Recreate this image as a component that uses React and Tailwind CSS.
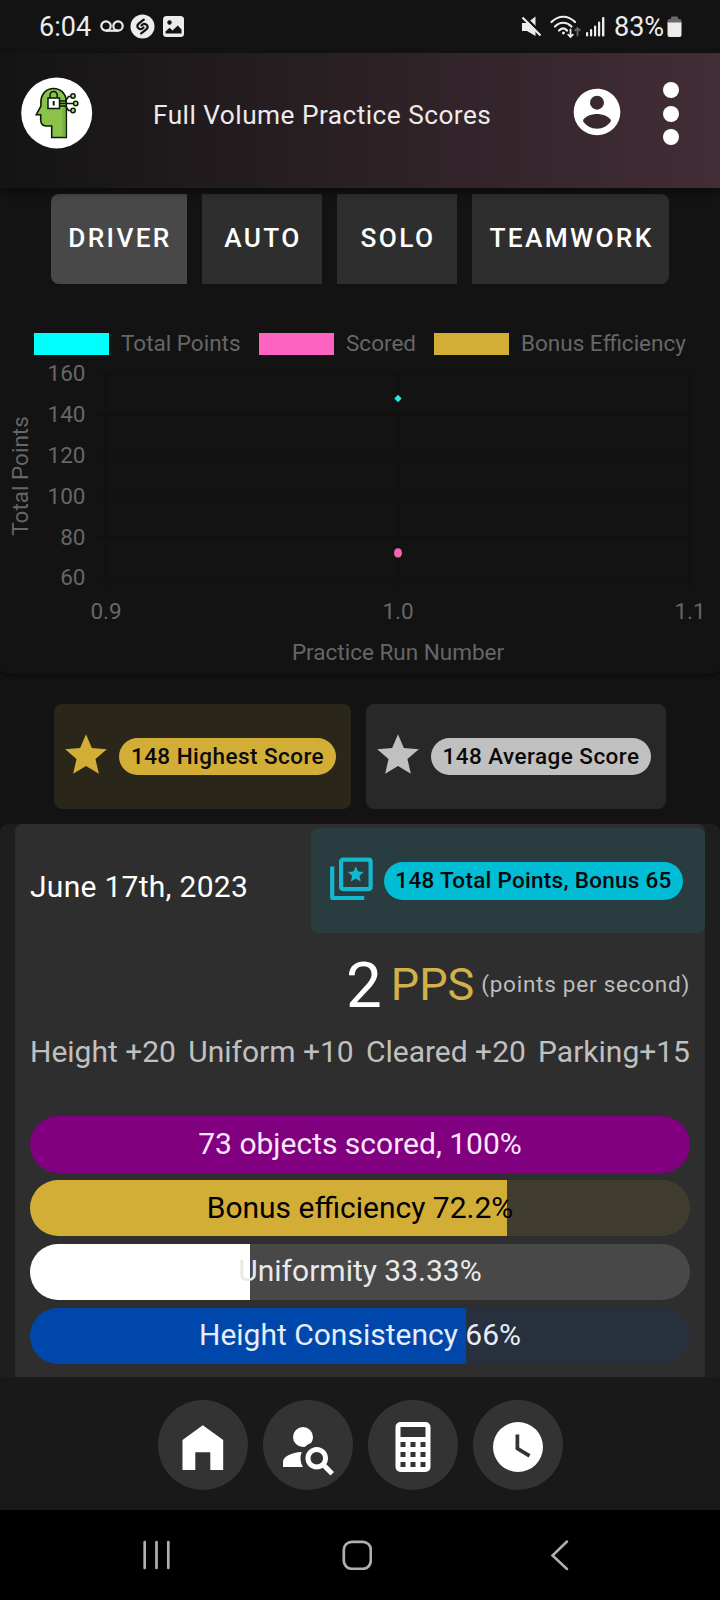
import clsx from 'clsx';

const tabs = [
  { label: 'DRIVER', className: 'w-[136px] rounded-l-[8px] bg-[#484848]' },
  { label: 'AUTO', className: 'w-[120px] bg-[#2e2e2e]' },
  { label: 'SOLO', className: 'w-[120px] bg-[#2e2e2e]' },
  { label: 'TEAMWORK', className: 'w-[197px] rounded-r-[8px] bg-[#2e2e2e]' },
];

const bonuses = ['Height +20', 'Uniform +10', 'Cleared +20', 'Parking+15'];

const bars = [
  { label: '73 objects scored, 100%', value: 100, track: 'bg-[#800080]', fill: 'bg-[#800080]', text: 'text-[#fbe6fb]' },
  { label: 'Bonus efficiency 72.2%', value: 72.2, track: 'bg-[#413d2e]', fill: 'bg-[#d2ae37]', text: 'text-black' },
  { label: 'Uniformity 33.33%', value: 33.33, track: 'bg-[#484848]', fill: 'bg-white', text: 'text-[#e9e9e9]' },
  { label: 'Height Consistency 66%', value: 66, track: 'bg-[#29303d]', fill: 'bg-[#0047ab]', text: 'text-[#e6edf8]' },
];

const navItems = [HomeIcon, AccountSearchIcon, CalculatorIcon, ClockIcon];

export default function App() {
  return (
    <div className="flex h-[1600px] w-[720px] flex-col overflow-hidden bg-[#131313] font-[Roboto,sans-serif] text-white">
      <StatusBar />
      <Header />

      {/* Category tabs */}
      <div className="mt-[6px] flex h-[90px] shrink-0 gap-[15px] pl-[51px]">
        {tabs.map((tab) => (
          <button
            key={tab.label}
            className={clsx('flex items-center justify-center pb-[1px] pl-[2px] text-[26.25px] font-medium tracking-[2.34px]', tab.className)}
          >
            {tab.label}
          </button>
        ))}
      </div>

      <ScoreChart />

      {/* Summary chips */}
      <div className="mt-[30px] flex h-[105px] shrink-0 gap-[15px] pl-[54px]">
        <div className="flex w-[297px] items-center rounded-[8px] bg-[#2a2619] pl-[7px]">
          <StarIcon className="mb-[4px] size-[50px] text-[#d2ae37]" />
          <Pill className="ml-[8px] h-[37px] w-[217px] bg-[#d2ae37] tracking-[0.45px]">148 Highest Score</Pill>
        </div>
        <div className="flex w-[300px] items-center rounded-[8px] bg-[#282828] pl-[7px]">
          <StarIcon className="mb-[4px] size-[50px] text-[#c0c0c0]" />
          <Pill className="ml-[8px] h-[37px] w-[220px] bg-[#c0c0c0] tracking-[0.45px]">148 Average Score</Pill>
        </div>
      </div>

      {/* Practice run */}
      <div className="mt-[15px] h-[553px] shrink-0 rounded-t-[8px] bg-[#1e1e1e] px-[15px]">
        <div className="h-full rounded-t-[8px] bg-[#2e2e2e] pt-[4px]">
          <div className="flex h-[105px] items-center justify-between pl-[15px]">
            <span className="pt-[12px] text-[30px] tracking-[0.28px]">June 17th, 2023</span>
            <div className="flex h-full w-[394px] items-center rounded-[8px] bg-[#293d40] pl-[15px]">
              <StarBoxIcon />
              <Pill className="ml-[8px] h-[38px] w-[299px] bg-[#00bcd4] tracking-[0.28px]">148 Total Points, Bonus 65</Pill>
            </div>
          </div>

          <div className="flex h-[105px] items-center justify-end pr-[15px]">
            <span className="mr-[9px] text-[63.75px] leading-none">2</span>
            <span className="mr-[7px] pb-[3px] text-[45px] leading-none text-[#d2b04a]">PPS</span>
            <span className="pb-[2px] text-[22.5px] leading-none tracking-[0.75px] text-[#bdbdbd]">(points per second)</span>
          </div>

          <div className="-mt-px flex justify-between px-[15px] text-[30px] leading-[30px] text-[#c0c0c0]">
            {bonuses.map((bonus) => (
              <span key={bonus} className="whitespace-nowrap">{bonus}</span>
            ))}
          </div>

          <div className="mt-[49.25px] flex flex-col gap-[7.5px] px-[15px]">
            {bars.map((bar) => (
              <ProgressBar key={bar.label} {...bar} />
            ))}
          </div>
        </div>
      </div>

      {/* Bottom navigation */}
      <nav className="flex h-[133px] shrink-0 items-center justify-center gap-[15px] bg-[#191919]">
        {navItems.map((Icon, i) => (
          <button key={i} className="mt-[3px] flex size-[90px] items-center justify-center rounded-full bg-[#333333]">
            <Icon />
          </button>
        ))}
      </nav>

      <SystemNav />
    </div>
  );
}

function StatusBar() {
  return (
    <div className="flex h-[53px] shrink-0 items-center justify-between pr-[38px] pl-[39px] text-[#ececec]">
      <div className="flex items-center">
        <span className="w-[61px] pt-[2px] text-[27px] leading-[51px]">6:04</span>
        <svg width="24" height="14" viewBox="0 0 24 14" fill="none" stroke="currentColor" strokeWidth="2.2">
          <circle cx="6" cy="6" r="4.7" />
          <circle cx="18" cy="6" r="4.7" />
          <path d="M6 10.7h12" />
        </svg>
        <svg className="ml-[6px]" width="25" height="25" viewBox="0 0 25 25">
          <circle cx="12.5" cy="12.5" r="12" fill="currentColor" />
          <g fill="none" stroke="#131313" strokeWidth="2.3" strokeLinecap="round">
            <path d="M13.8 5.6L9 9.300c-2.300 1.900-2.200 4 .300 5.500 1.500.8 2.800.3 4.200-1.300" />
            <path d="M11.200 19.400l4.800-3.700c2.300-1.900 2.200-4-.300-5.500-1.500-.8-2.800-.3-4.200 1.300" />
          </g>
        </svg>
        <svg className="ml-[8px]" width="21" height="21" viewBox="0 0 21 21">
          <rect width="21" height="21" rx="3.5" fill="currentColor" />
          <circle cx="6.5" cy="6.5" r="2.2" fill="#131313" />
          <path d="M2.5 17.5v-2l4-3.8 3 2.8 5.3-5 3.7 4v4z" fill="#131313" />
        </svg>
      </div>
      <div className="flex items-center">
        <svg width="21" height="22" viewBox="0 0 21 22">
          <path d="M1 7h5l8.500-6.500v19.500L6 15H1z" fill="currentColor" />
          <path d="M3.500 .5l18 18" stroke="#131313" strokeWidth="2.500" />
          <path d="M1.500 1.500l18 18" stroke="currentColor" strokeWidth="2.200" />
        </svg>
        <svg className="ml-[8px]" width="31" height="24" viewBox="0 0 31 24" fill="none" stroke="currentColor" strokeWidth="2.200" strokeLinecap="round">
          <path d="M1.500 7c7-7 16.500-7 23.500 0" />
          <path d="M5 11.500c5-5 11.500-5 16.500 0" />
          <path d="M9 15.500c3-2.800 6-2.800 8 0" />
          <circle cx="13.300" cy="18" r="1" fill="currentColor" strokeWidth="1" />
          <path d="M20.500 14.500v7.500m-2.300-2.300l2.300 2.300 2.300-2.300" strokeWidth="1.800" />
          <path d="M27.500 20.500v-7.500m-2.300 2.300l2.300-2.300 2.300 2.300" stroke="#666666" strokeWidth="1.800" />
        </svg>
        <svg className="ml-[5px]" width="20" height="20" viewBox="0 0 20 20" fill="currentColor">
          <rect x="0" y="15" width="2.200" height="4.500" rx="1" />
          <rect x="4" y="12" width="2.200" height="7.500" rx="1" />
          <rect x="8" y="8.500" width="2.200" height="11" rx="1" />
          <rect x="12" y="4.500" width="2.200" height="15" rx="1" />
          <rect x="16" y="0" width="2.400" height="19.500" rx="1" />
        </svg>
        <span className="ml-[8px] w-[53px] pt-[2px] text-[27px] leading-[51px]">83%</span>
        <svg width="15" height="22" viewBox="0 0 15 22">
          <path d="M4 1.500a1 1 0 011-1h5a1 1 0 011 1V3h1.500A2 2 0 0114.500 5v3H.5V5a2 2 0 012-2H4z" fill="#6b6b6b" />
          <path d="M.5 6.500h14V19a2 2 0 01-2 2h-10a2 2 0 01-2-2z" fill="currentColor" />
        </svg>
      </div>
    </div>
  );
}

function Header() {
  return (
    <header className="z-10 flex h-[135px] shrink-0 items-center bg-gradient-to-r from-[#141414] to-[#432d37] shadow-[0_4px_8px_rgba(0,0,0,0.45)]">
      <Logo />
      <h1 className="mb-[9px] ml-[60px] w-[416px] text-[26.25px] tracking-[0.46px] whitespace-nowrap text-[#eeeaec]">
        Full Volume Practice Scores
      </h1>
      <svg className="mb-[18px] size-[56px]" viewBox="0 0 24 24" fill="currentColor">
        <path d="M12,19.2C9.5,19.2 7.29,17.92 6,16C6.03,14 10,12.9 12,12.9C14,12.9 17.97,14 18,16C16.71,17.92 14.5,19.2 12,19.2M12,5A3,3 0 0,1 15,8A3,3 0 0,1 12,11A3,3 0 0,1 9,8A3,3 0 0,1 12,5M12,2A10,10 0 0,0 2,12A10,10 0 0,0 12,22A10,10 0 0,0 22,12C22,6.47 17.5,2 12,2Z" />
      </svg>
      <div className="mb-[14px] ml-[38px] flex flex-col gap-[7.5px]">
        <span className="size-[16px] rounded-full bg-white" />
        <span className="size-[16px] rounded-full bg-white" />
        <span className="size-[16px] rounded-full bg-white" />
      </div>
    </header>
  );
}

function Logo() {
  return (
    <svg className="mb-[15px] ml-[21px] shrink-0" width="72" height="72" viewBox="0 0 72 72">
      <circle cx="35.7" cy="36" r="35.5" fill="#ffffff" />
      <path
        d="M45.300 60.500H30.700V49H25Q20 48.500 19.700 43.500V37.700H15.300L19.900 29V25C20.200 16 26 11.500 32.500 11.500C39 11.500 45.300 16 45.300 25Z"
        fill="#8bc34a"
        stroke="#0b1a0b"
        strokeWidth="1.600"
      />
      <path d="M41.500 33v26.700h3V27z" fill="#74b13b" />
      <g fill="none" stroke="#0b1a0b" strokeWidth="1.500">
        <path d="M29 21v-3a3.600 3.600 0 017.200 0v3" />
        <rect x="27" y="21" width="11.500" height="10.500" fill="#ffffff" />
        <path d="M32.700 24v4.500" strokeWidth="2" />
        <path d="M38.500 24h6l3-4.500h2M38.500 26.500h14M38.500 29h6l3 4.500h2" />
        <circle cx="52" cy="19" r="2.200" fill="#b5df80" />
        <circle cx="54.700" cy="26.500" r="2.200" fill="#b5df80" />
        <circle cx="52" cy="33.500" r="2.200" fill="#b5df80" />
      </g>
    </svg>
  );
}

function ScoreChart() {
  const yTicks = [160, 140, 120, 100, 80, 60];
  const xTicks = ['0.9', '1.0', '1.1'];

  return (
    <section className="h-[390px] shrink-0 rounded-b-[8px] pt-[48px] shadow-[0_3px_3px_rgba(0,0,0,0.3)]">
      <div className="flex h-[23px] items-center pl-[34px] text-[22.5px] whitespace-nowrap text-[#666666]">
        <LegendItem className="w-[225px]" swatch="bg-[#00ffff]" label="Total Points" />
        <LegendItem className="w-[175px]" swatch="bg-[#ff63c1]" label="Scored" />
        <LegendItem swatch="bg-[#d2ae37]" label="Bonus Efficiency" />
      </div>
      <svg className="mt-[3px]" width="720" height="314" viewBox="0 358 720 314">
        <g stroke="#111111" strokeWidth="1.800">
          {yTicks.map((tick, i) => (
            <path key={tick} d={`M94 ${374 + i * 40.8}H690`} />
          ))}
          {xTicks.map((tick, i) => (
            <path key={tick} d={`M${106 + i * 292} 374V588`} />
          ))}
        </g>
        <g fill="#666666" fontSize="22.5">
          {yTicks.map((tick, i) => (
            <text key={tick} x="85.500" y={381.3 + i * 40.8} textAnchor="end">{tick}</text>
          ))}
          {xTicks.map((tick, i) => (
            <text key={tick} x={106 + i * 292} y="619" textAnchor="middle">{tick}</text>
          ))}
          <text x="398" y="660" textAnchor="middle">Practice Run Number</text>
          <text transform="translate(28 476) rotate(-90)" textAnchor="middle">Total Points</text>
        </g>
        <path d="M398 394.800l3.700 3.700-3.700 3.700-3.700-3.700z" fill="#29e8e8" />
        <ellipse cx="398" cy="553.500" rx="3.700" ry="4" fill="#c8926a" />
        <ellipse cx="398" cy="552.500" rx="3.700" ry="4.200" fill="#f763bb" />
      </svg>
    </section>
  );
}

function LegendItem({ className, swatch, label }) {
  return (
    <div className={clsx('flex items-center gap-[12px]', className)}>
      <span className={clsx('mt-[1px] h-[22.5px] w-[75px]', swatch)} />
      <span>{label}</span>
    </div>
  );
}

function Pill({ className, children }) {
  return (
    <span className={clsx('flex items-center justify-center rounded-full pb-[1px] text-[22.5px] leading-none font-medium whitespace-nowrap text-[#0a0a0a]', className)}>
      {children}
    </span>
  );
}

function ProgressBar({ label, value, track, fill, text }) {
  return (
    <div className={clsx('relative h-[56.25px] overflow-hidden rounded-full', track)}>
      <div className={clsx('h-full', fill)} style={{ width: `${value}%` }} />
      <span className={clsx('absolute inset-0 flex items-center justify-center pb-[2px] text-[30px]', text)}>{label}</span>
    </div>
  );
}

function SystemNav() {
  return (
    <div className="flex h-[90px] shrink-0 items-center bg-black text-[#b0b0b0]">
      <svg className="ml-[142px]" width="30" height="30" viewBox="0 0 30 30" stroke="currentColor" strokeWidth="2.7" strokeLinecap="round">
        <path d="M2.7 2v26M14.5 2v26M26.3 2v26" />
      </svg>
      <svg className="ml-[170px]" width="30" height="30" viewBox="0 0 30 30" fill="none" stroke="currentColor" strokeWidth="2.7">
        <rect x="1.8" y="1.8" width="27" height="27" rx="8" />
      </svg>
      <svg className="ml-[178px]" width="20" height="32" viewBox="0 0 20 32" fill="none" stroke="currentColor" strokeWidth="2.5" strokeLinecap="round">
        <path d="M17 2.5L2.5 16.500 17 30" />
      </svg>
    </div>
  );
}

function StarIcon({ className }) {
  return (
    <svg className={clsx('shrink-0', className)} viewBox="0 0 24 24" fill="currentColor">
      <path d="M12,17.27L18.18,21L16.54,13.97L22,9.24L14.81,8.62L12,2L9.19,8.62L2,9.24L7.45,13.97L5.82,21L12,17.27Z" />
    </svg>
  );
}

function StarBoxIcon() {
  return (
    <svg className="mb-[4px] size-[50px] shrink-0 text-[#14b8cf]" viewBox="0 0 50 50" fill="none" stroke="currentColor" strokeWidth="4.2">
      <rect x="15.100" y="5.600" width="29.500" height="29.500" rx="2" />
      <path d="M6.200 12.500v31.500h32" strokeLinejoin="round" />
      <path
        d="M12,17.27L18.18,21L16.54,13.97L22,9.24L14.81,8.62L12,2L9.19,8.62L2,9.24L7.45,13.97L5.82,21L12,17.27Z"
        transform="translate(20.200 10.600) scale(0.800)"
        fill="currentColor"
        stroke="none"
      />
    </svg>
  );
}

function HomeIcon() {
  return (
    <svg width="60" height="60" viewBox="0 0 60 60" fill="currentColor">
      <path d="M9.5 25L29.8 10.200 50.200 25v30H37.300V37.200H22.300V55H9.500z" />
    </svg>
  );
}

function AccountSearchIcon() {
  return (
    <svg className="mt-[4px] size-[60px]" viewBox="0 0 24 24" fill="currentColor">
      <path d="M15.5,12C18,12 20,14 20,16.5C20,17.38 19.75,18.21 19.31,18.9L22.39,22L21,23.39L17.88,20.32C17.19,20.75 16.37,21 15.5,21C13,21 11,19 11,16.5C11,14 13,12 15.5,12M15.5,14A2.5,2.5 0 0,0 13,16.5A2.5,2.5 0 0,0 15.5,19A2.5,2.5 0 0,0 18,16.5A2.5,2.5 0 0,0 15.5,14M10,4A4,4 0 0,1 14,8C14,8.91 13.69,9.75 13.18,10.43C12.32,10.75 11.55,11.26 10.91,11.9L10,12A4,4 0 0,1 6,8A4,4 0 0,1 10,4M2,20V18C2,15.88 5.31,14.14 9.5,14C9.18,14.78 9,15.62 9,16.5C9,17.79 9.38,19 10,20H2Z" />
    </svg>
  );
}

function CalculatorIcon() {
  return (
    <svg className="mt-[4px] size-[60px]" viewBox="0 0 24 24" fill="currentColor">
      <path d="M7,2H17A2,2 0 0,1 19,4V20A2,2 0 0,1 17,22H7A2,2 0 0,1 5,20V4A2,2 0 0,1 7,2M7,4V8H17V4H7M7,10V12H9V10H7M11,10V12H13V10H11M15,10V12H17V10H15M7,14V16H9V14H7M11,14V16H13V14H11M15,14V16H17V14H15M7,18V20H9V18H7M11,18V20H13V18H11M15,18V20H17V18H15Z" />
    </svg>
  );
}

function ClockIcon() {
  return (
    <svg className="mt-[4px] size-[60px]" viewBox="0 0 24 24" fill="currentColor">
      <path d="M12,2A10,10 0 0,0 2,12A10,10 0 0,0 12,22A10,10 0 0,0 22,12A10,10 0 0,0 12,2M16.2,16.2L11,13V7H12.5V12.2L17,14.9L16.2,16.2Z" />
    </svg>
  );
}
